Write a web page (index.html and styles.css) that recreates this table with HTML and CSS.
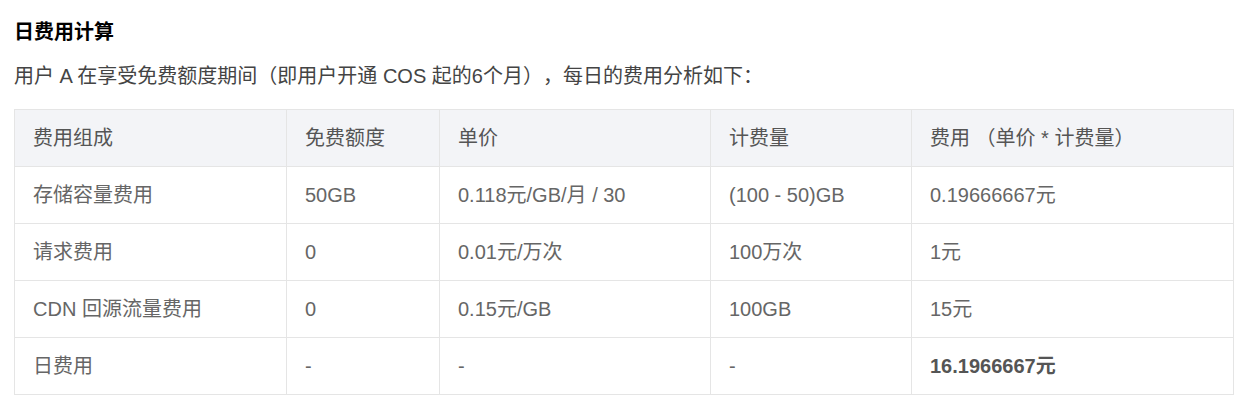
FILE: index.html
```html
<!DOCTYPE html>
<html lang="zh-CN">
<head>
<meta charset="utf-8">
<link rel="stylesheet" href="styles.css">
</head>
<body>
<div class="doc">
  <h3 class="title">日费用计算</h3>
  <p class="desc">用户 A 在享受免费额度期间（即用户开通 COS 起的6个月），每日的费用分析如下：</p>
  <table class="fee">
    <colgroup>
      <col class="c1"><col class="c2"><col class="c3"><col class="c4"><col class="c5">
    </colgroup>
    <thead>
      <tr><th>费用组成</th><th>免费额度</th><th>单价</th><th>计费量</th><th>费用 （单价 * 计费量）</th></tr>
    </thead>
    <tbody>
      <tr><td>存储容量费用</td><td>50GB</td><td>0.118元/GB/月 / 30</td><td>(100 - 50)GB</td><td>0.19666667元</td></tr>
      <tr><td>请求费用</td><td>0</td><td>0.01元/万次</td><td>100万次</td><td>1元</td></tr>
      <tr><td>CDN 回源流量费用</td><td>0</td><td>0.15元/GB</td><td>100GB</td><td>15元</td></tr>
      <tr><td>日费用</td><td>-</td><td>-</td><td>-</td><td><strong>16.1966667元</strong></td></tr>
    </tbody>
  </table>
</div>
</body>
</html>
```

FILE: styles.css
```css
html, body {
  margin: 0;
  padding: 0;
  background: #fff;
}
.doc {
  padding: 18px 9px 0 14px;
  font-family: "Liberation Sans", "Noto Sans CJK SC", sans-serif;
  color: #444;
  text-spacing-trim: space-all;
}
.title {
  margin: 0;
  font-size: 20px;
  line-height: 28px;
  font-weight: bold;
  color: #000;
}
.desc {
  margin: 16px 0 0 0;
  font-size: 20px;
  line-height: 28px;
  color: #444;
}
.fee {
  margin-top: 19px;
  width: 1219px;
  table-layout: fixed;
  border-collapse: collapse;
  font-size: 20px;
  line-height: 24px;
  color: #666;
}
.c1 { width: 272px; }
.c2 { width: 153px; }
.c3 { width: 271px; }
.c4 { width: 201px; }
.c5 { width: 322px; }
.fee th, .fee td {
  border: 1px solid #e5e5e5;
  height: 56px;
  padding: 0 18px;
  text-align: left;
  vertical-align: middle;
  font-weight: normal;
}
.fee th {
  background: #f3f4f7;
  color: #555;
}
.fee strong {
  font-weight: bold;
  color: #555;
}
```
